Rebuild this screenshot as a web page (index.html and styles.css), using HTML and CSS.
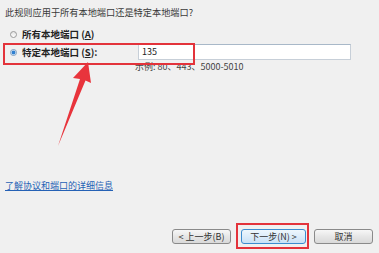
FILE: index.html
```html
<!DOCTYPE html>
<html lang="zh-CN">
<head>
  <meta charset="UTF-8">
  <title>新建入站规则向导 - 协议和端口</title>
  <link rel="stylesheet" href="styles.css">
</head>
<body>
  <div class="wizard">
    <p class="question">此规则应用于所有本地端口还是特定本地端口?</p>

    <div class="options">
      <div class="opt">
        <span class="radio"></span>
        <span class="opt-label">所有本地端口 (<u>A</u>)</span>
      </div>
      <div class="opt specific">
        <span class="radio checked"></span>
        <span class="opt-label">特定本地端口 (<u>S</u>):</span>
        <span class="port-input">135</span>
      </div>
      <div class="hint">示例: 80、443、5000-5010</div>
    </div>

    <a class="help" href="#">了解协议和端口的详细信息</a>

    <div class="buttons">
      <span class="btn">&lt; 上一步(<u>B</u>)</span>
      <span class="mark"><span class="btn primary">下一步(<u>N</u>) &gt;</span></span>
      <span class="btn">取消</span>
    </div>

    <!-- 红色标注箭头 -->
    <svg class="arrow" width="379" height="253" viewBox="0 0 379 253">
      <polygon points="88,62 91,83 85.5,80.5 58,146 80,79 73,78" fill="#e8343c"/>
    </svg>
  </div>
</body>
</html>
```

FILE: styles.css
```css
*{box-sizing:border-box;margin:0;padding:0;}

body{
  background:#f0f0f0;
  font-family:"Noto Sans CJK SC","Liberation Sans",sans-serif;
  font-size:9px;
  color:#2b2b2b;
}

/* ---------- Fenêtre ---------- */
.wizard{
  position:relative;
  width:379px;
  height:253px;
  display:flex;
  flex-direction:column;
}

.question{
  padding:6px 0 0 5px;
  line-height:12px;
  font-size:9.2px;
  color:#3a3a3a;
}

/* ---------- Options ---------- */
.options{margin-top:10px;}

.opt{
  display:flex;
  align-items:center;
  gap:5px;
  height:12px;
  padding-left:10px;
}

.opt-label{
  font-size:9.5px;
  font-weight:bold;
  color:#222;
}

.radio{
  width:7px;
  height:7px;
  border-radius:50%;
  border:1px solid #9a9a9a;
  background:linear-gradient(#e4e4e4,#fdfdfd);
  flex:none;
}
.radio.checked{
  background:radial-gradient(circle,#2f7fd0 0 1.6px,#cfe3f6 2.2px,#f6f6f6 3px);
  border-color:#7c9ec0;
}

.specific{
  position:relative;
  height:18px;
  margin-top:3px;
}
.specific .opt-label{width:111px;}
.specific::after{
  content:"";
  position:absolute;
  left:3px;
  top:0;
  width:188px;
  height:18px;
  border:2px solid #e3333b;
}

.port-input{
  width:213px;
  height:16px;
  line-height:14px;
  padding-left:3px;
  background:#fff;
  border:1px solid #c7cfd8;
  border-top-color:#a8b8c8;
  font-size:9px;
  color:#222;
}

.hint{
  padding-left:135px;
  line-height:12px;
  color:#444;
}

/* ---------- Lien ---------- */
.help{
  margin-top:auto;
  margin-left:5px;
  line-height:12px;
  color:#2561b5;
  text-decoration:underline;
}

/* ---------- Boutons ---------- */
.buttons{
  display:flex;
  justify-content:flex-end;
  align-items:center;
  gap:5px;
  margin:31px 6px 4px 0;
}

.btn{
  display:flex;
  align-items:center;
  justify-content:center;
  width:59px;
  height:15px;
  border:1px solid #8a8a8a;
  border-radius:3px;
  background:linear-gradient(#f7f7f7,#e6e6e6 50%,#d9d9d9);
  font-size:9px;
  color:#333;
}
.btn u{text-decoration:none;}

.mark{
  border:2px solid #e3333b;
  padding:4px 1px 3px 3px;
}

.btn.primary{
  width:65px;
  border-color:#3c8ccf;
  background:linear-gradient(#eef7fd,#dcecfa 50%,#c9e1f5);
}

.arrow{
  position:absolute;
  left:0;
  top:0;
  pointer-events:none;
}
```
